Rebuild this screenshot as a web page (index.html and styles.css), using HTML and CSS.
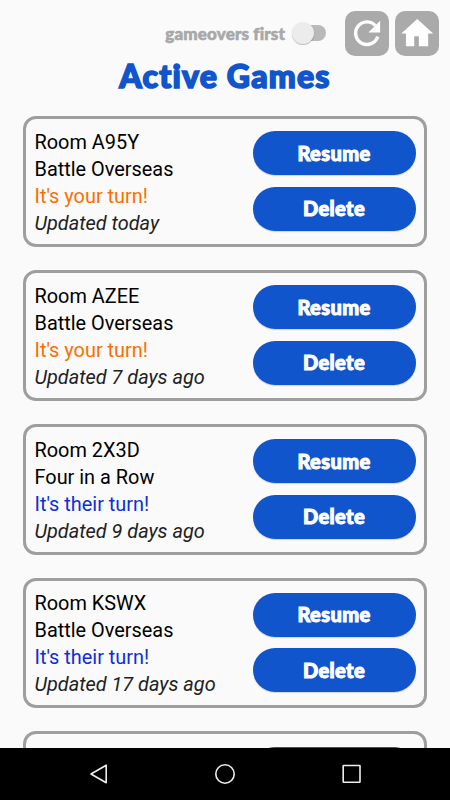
FILE: index.html
```
<!DOCTYPE html>
<html lang="en">

<head>
	<meta charset="UTF-8">
	<title>Active Games</title>
	<link rel="stylesheet" href="styles.css">
</head>

<body>
	<header>
		<span class="sort-label">gameovers first</span>
		<button class="switch" aria-label="gameovers first"></button>
		<button class="icon-button" aria-label="Refresh">
			<svg viewBox="0 0 44 44">
				<path d="M32.4 25.3A11.2 11.2 0 1 1 30 14.4" fill="none" stroke="#fff" stroke-width="3.4" />
				<path d="M34.7 9.6V21.2H23.2Z" fill="#fff" />
			</svg>
		</button>
		<button class="icon-button" aria-label="Home">
			<svg viewBox="0 0 44 44">
				<path d="M22 7.8L6.2 22.3H10.8V34.8H19V25H23.6V34.8H32.8V22.3H37.8Z" fill="#fff" />
			</svg>
		</button>
	</header>
	<h1>Active Games</h1>
	<main>
		<section class="game">
			<div class="info">
				<p>Room A95Y</p>
				<p>Battle Overseas</p>
				<p class="yours">It's your turn!</p>
				<p class="updated">Updated today</p>
			</div>
			<div class="actions">
				<button>Resume</button>
				<button>Delete</button>
			</div>
		</section>
		<section class="game">
			<div class="info">
				<p>Room AZEE</p>
				<p>Battle Overseas</p>
				<p class="yours">It's your turn!</p>
				<p class="updated">Updated 7 days ago</p>
			</div>
			<div class="actions">
				<button>Resume</button>
				<button>Delete</button>
			</div>
		</section>
		<section class="game">
			<div class="info">
				<p>Room 2X3D</p>
				<p>Four in a Row</p>
				<p class="theirs">It's their turn!</p>
				<p class="updated">Updated 9 days ago</p>
			</div>
			<div class="actions">
				<button>Resume</button>
				<button>Delete</button>
			</div>
		</section>
		<section class="game">
			<div class="info">
				<p>Room KSWX</p>
				<p>Battle Overseas</p>
				<p class="theirs">It's their turn!</p>
				<p class="updated">Updated 17 days ago</p>
			</div>
			<div class="actions">
				<button>Resume</button>
				<button>Delete</button>
			</div>
		</section>
		<section class="game">
			<div class="info"></div>
			<div class="actions">
				<button></button>
				<button></button>
			</div>
		</section>
	</main>
	<nav>
		<svg viewBox="0 0 24 24">
			<path d="M4 12L19.2 3.2V20.8Z" />
		</svg>
		<svg viewBox="0 0 24 24">
			<circle cx="12" cy="12" r="9.2" />
		</svg>
		<svg viewBox="0 0 24 24">
			<rect x="3.2" y="3.5" width="16.8" height="16.8" rx="0.5" />
		</svg>
	</nav>
</body>

</html>
```
FILE: styles.css
```
:root {
	--background: #fafafa;
	--main: #1155cc;
	--grey: #9e9e9e;
	--title-font: "Lato", sans-serif;
}

* {
	padding: 0;
	margin: 0;
	box-sizing: border-box;
}

body {
	display: flex;
	flex-flow: column nowrap;
	height: 100vh;
	overflow: hidden;
	background-color: var(--background);
	font-family: "Roboto", sans-serif;
}

button {
	border: none;
}

header {
	flex: 0 0 55.5px;
	display: flex;
	align-items: center;
	justify-content: flex-end;
	padding: 11px 11px 0 0;
}

.sort-label {
	font: 900 17px var(--title-font);
	letter-spacing: 0.15px;
	color: #a8a8a8;
	-webkit-text-stroke: 0.6px #a8a8a8;
	margin-right: 16px;
	white-space: nowrap;
}

.switch {
	width: 25px;
	height: 16px;
	border-radius: 8px;
	background-color: #b9b9b9;
	margin-right: 18.5px;
	position: relative;
}

.switch::before {
	content: "";
	position: absolute;
	left: -9.5px;
	top: -3px;
	width: 22px;
	height: 22px;
	border-radius: 50%;
	background-color: #ececec;
	box-shadow: 0 1px 1px rgba(0, 0, 0, 0.25);
}

.icon-button {
	width: 44.5px;
	height: 44.5px;
	border-radius: 10px;
	background-color: #aaa;
}

.icon-button + .icon-button {
	margin-left: 5.5px;
}

.icon-button svg {
	display: block;
	width: 100%;
}

h1 {
	flex: 0 0 60.8px;
	font: 900 32px/39px var(--title-font);
	letter-spacing: 1.2px;
	color: var(--main);
	-webkit-text-stroke: 1.6px var(--main);
	text-align: center;
}

main {
	flex: 1 1 0;
	min-height: 0;
	overflow: hidden;
	padding: 0 23px;
}

.game {
	display: flex;
	justify-content: space-between;
	height: 130.8px;
	margin-bottom: 23px;
	padding: 9px 8.5px;
	border: 3px solid var(--grey);
	border-radius: 13px;
}

.info {
	padding-top: 0.8px;
	font-size: 19.9px;
	line-height: 27px;
	color: #000;
	white-space: nowrap;
}

.yours {
	color: #ff6d00;
}

.theirs {
	color: #0b2fd8;
}

.updated {
	font-style: italic;
	color: #212121;
}

.actions {
	display: flex;
	flex-flow: column nowrap;
	gap: 11.5px;
	width: 163px;
	padding-top: 3.2px;
}

.actions button {
	height: 44px;
	padding-bottom: 1px;
	border-radius: 22px;
	background-color: var(--main);
	color: #fff;
	font: 900 20px var(--title-font);
	letter-spacing: 0.4px;
	-webkit-text-stroke: 1px #fff;
	box-shadow: 0 1px 1px rgba(0, 0, 0, 0.15);
}

nav {
	flex: 0 0 52px;
	display: flex;
	align-items: center;
	justify-content: center;
	gap: 102.5px;
	background-color: #000;
}

nav svg {
	width: 24px;
	height: 24px;
	fill: none;
	stroke: #eee;
	stroke-width: 1.6;
	stroke-linejoin: round;
}
```
